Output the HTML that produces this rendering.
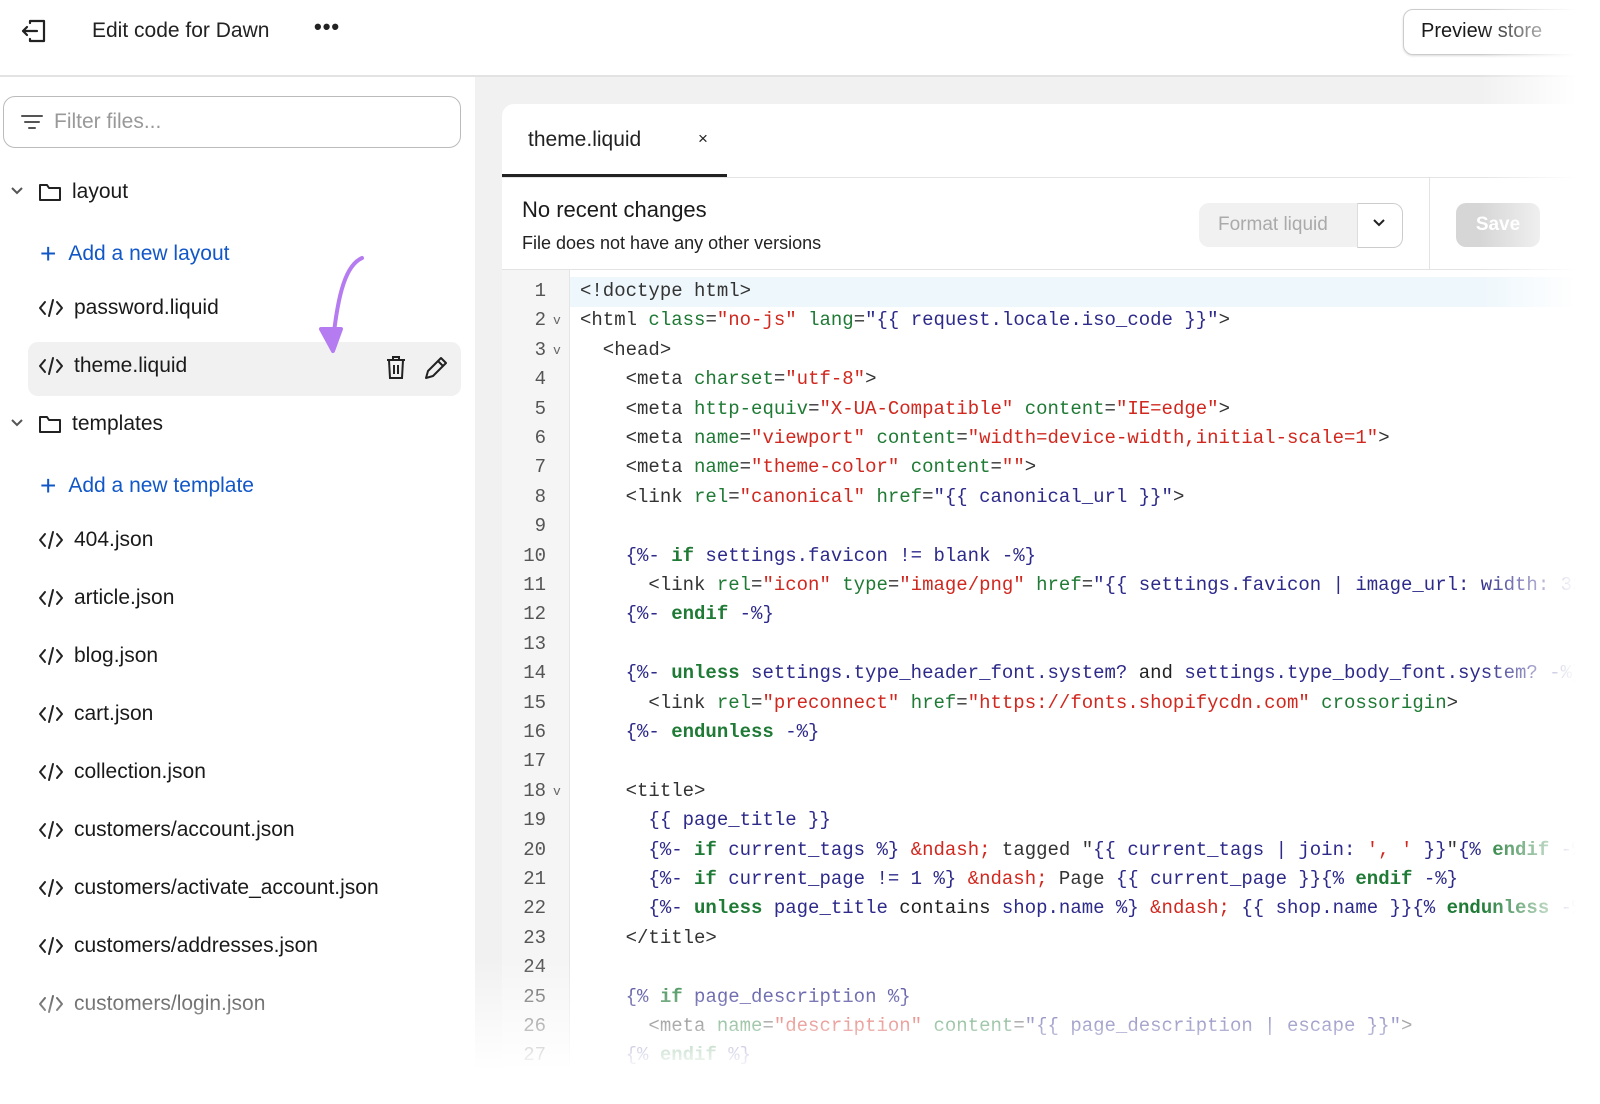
<!DOCTYPE html>
<html><head><style>
body{margin:0;width:1600px;height:1083px;overflow:hidden;background:#fff;font-family:"Liberation Sans",sans-serif;position:relative}
.hdr{position:absolute;left:0;top:0;width:1600px;height:75px;background:#fff;border-bottom:2px solid #e3e3e3;box-shadow:0 2px 4px rgba(0,0,0,.05)}
.side{position:absolute;left:0;top:77px;width:475px;height:1006px;background:#fff}
.main{position:absolute;left:475px;top:77px;width:1125px;height:1006px;background:#f1f1f1}
.item{position:absolute;left:38px;font-size:21px;color:#1a1a1a;display:flex;align-items:center}
.item svg{margin-right:10px}
.blue{color:#1257c7}
.code{position:absolute;left:502px;top:270px;width:1098px;height:813px;background:#fff;font-family:"Liberation Mono",monospace;font-size:19px}
.gut{position:absolute;left:0;top:0;width:67px;height:813px;background:#f5f5f5;border-right:1px solid #e5e5e5}
.ln{position:absolute;left:0;width:44px;text-align:right;color:#555;font-size:19px}
.cl{position:absolute;left:78px;white-space:pre;color:#333}
.a{color:#1f7a35}.s{color:#d0281f}.v{color:#2d2a8a}.k{color:#1f7a35;font-weight:bold}
</style></head><body>
<div class="hdr">
<svg style="position:absolute;left:20px;top:18px" width="28" height="26" viewBox="0 0 28 26" fill="none" stroke="#222" stroke-width="2.2" stroke-linecap="round" stroke-linejoin="round"><path d="M10 5V3h14v20H10v-2"/><path d="M17 13H3M7 9l-4 4 4 4"/></svg>
<div style="position:absolute;left:92px;top:19px;font-size:21px;color:#222">Edit code for Dawn</div>
<div style="position:absolute;left:314px;top:14px;font-size:22px;letter-spacing:1px;color:#222;font-weight:bold">•••</div>
<div style="position:absolute;left:1403px;top:9px;width:220px;height:44px;border:1px solid #ccc;border-radius:10px;box-shadow:0 1px 2px rgba(0,0,0,.15)"></div>
<div style="position:absolute;left:1421px;top:20px;font-size:20px;color:#1a1a1a">Preview store</div>
</div>
<div class="side">
<div style="position:absolute;left:3px;top:19px;width:456px;height:50px;border:1px solid #bbb;border-radius:12px"></div>
<svg style="position:absolute;left:20px;top:36px" width="24" height="18" stroke="#555" stroke-width="2" stroke-linecap="round"><path d="M2 3h20M5 9h14M9 15h6"/></svg>
<div style="position:absolute;left:54px;top:33px;font-size:21px;color:#999">Filter files...</div>
<div style="position:absolute;left:28px;top:265px;width:433px;height:54px;background:#f1f1f1;border-radius:10px"></div>
</div>
<div id="items"></div>
<div class="main">
<div style="position:absolute;left:27px;top:27px;width:1098px;height:1000px;background:#fff;border-radius:12px 0 0 0"></div>
<div style="position:absolute;left:53px;top:51px;font-size:21px;color:#222">theme.liquid</div>
<div style="position:absolute;left:223px;top:52px;font-size:17px;color:#222">×</div>
<div style="position:absolute;left:27px;top:97px;width:225px;height:3px;background:#222"></div>
<div style="position:absolute;left:27px;top:100px;width:1098px;height:1px;background:#e3e3e3"></div>
<div style="position:absolute;left:47px;top:120px;font-size:22px;color:#1a1a1a">No recent changes</div>
<div style="position:absolute;left:47px;top:156px;font-size:18px;color:#222">File does not have any other versions</div>
<div style="position:absolute;left:724px;top:126px;width:202px;height:44px;background:#f1f1f1;border-radius:10px"></div>
<div style="position:absolute;left:882px;top:126px;width:44px;height:43px;background:#fff;border:1px solid #ccc;border-left:1px solid #ddd;border-radius:0 10px 10px 0"></div>
<div style="position:absolute;left:743px;top:137px;font-size:19px;color:#aaa">Format liquid</div>
<svg style="position:absolute;left:897px;top:141px" width="14" height="10" fill="none" stroke="#222" stroke-width="2"><path d="M2 2l5 5 5-5"/></svg>
<div style="position:absolute;left:954px;top:100px;width:1px;height:93px;background:#e3e3e3"></div>
<div style="position:absolute;left:981px;top:126px;width:84px;height:44px;background:#d6d6d6;border-radius:10px;color:#fff;font-size:19px;font-weight:bold;text-align:center;line-height:44px">Save</div>
<div style="position:absolute;left:27px;top:192px;width:1098px;height:1px;background:#e3e3e3"></div>
</div>
<div class="code">
<div style="position:absolute;left:0;top:7px;width:1098px;height:30px;background:#eef7fc"></div>
<div class="gut"></div>
<div id="lines"></div>
</div>
<svg style="position:absolute;left:312px;top:253px" width="56" height="106" fill="none" stroke="#b57bf0" stroke-width="4" stroke-linecap="round"><path d="M50 5C34 12 26 40 21 88"/><path d="M9 76l12 22 8-22z" fill="#b57bf0" stroke-linejoin="round"/></svg>
<svg style="position:absolute;left:385px;top:355px" width="22" height="26" fill="none" stroke="#222" stroke-width="2"><path d="M2 5h18M8 5V2h6v3M4 5l1 18h12l1-18M9 10v9M13 10v9"/></svg>
<svg style="position:absolute;left:423px;top:355px" width="26" height="26" fill="none" stroke="#222" stroke-width="2" stroke-linejoin="round"><path d="M3 23l2-7L18 3l5 5L10 21z M15 6l5 5"/></svg>
<div style="position:absolute;left:0;top:960px;width:1600px;height:123px;background:linear-gradient(rgba(255,255,255,0),#fff 90%)"></div>
<div style="position:absolute;left:1480px;top:0;width:120px;height:1083px;background:linear-gradient(90deg,rgba(255,255,255,0),#fff 80%)"></div>
<script>
var ic='<svg width="26" height="20" fill="none" stroke="#222" stroke-width="2" stroke-linecap="round" stroke-linejoin="round"><path d="M7 4L2 10l5 6M19 4l5 6-5 6M15 2l-4 16"/></svg>';
var fold='<svg width="24" height="20" fill="none" stroke="#222" stroke-width="2" stroke-linejoin="round"><path d="M2 3h7l2 3h11v12H2z"/></svg>';
var chev='<svg style="position:absolute;left:-28px;top:6px" width="14" height="10" fill="none" stroke="#555" stroke-width="2"><path d="M2 2l5 5 5-5"/></svg>';
var plus='<span style="font-size:28px;margin-right:12px;margin-left:2px">+</span>';
var it=[[194,fold,'layout',0,1],[252,plus,'Add a new layout',1],[310,ic,'password.liquid'],[368,ic,'theme.liquid'],[426,fold,'templates',0,1],[484,plus,'Add a new template',1],[542,ic,'404.json'],[600,ic,'article.json'],[658,ic,'blog.json'],[716,ic,'cart.json'],[774,ic,'collection.json'],[832,ic,'customers/account.json'],[890,ic,'customers/activate_account.json'],[948,ic,'customers/addresses.json'],[1006,ic,'customers/login.json']];
var h='';it.forEach(function(a){h+='<div class="item'+(a[3]?' blue':'')+'" style="top:'+(a[0]-14)+'px">'+(a[4]?chev:'')+a[1]+a[2]+'</div>'});
document.getElementById('items').innerHTML=h;
var L=['&lt;!doctype html&gt;',
'&lt;html <span class=a>class</span>=<span class=s>"no-js"</span> <span class=a>lang</span>=<span class=v>"{{ request.locale.iso_code }}"</span>&gt;',
'  &lt;head&gt;',
'    &lt;meta <span class=a>charset</span>=<span class=s>"utf-8"</span>&gt;',
'    &lt;meta <span class=a>http-equiv</span>=<span class=s>"X-UA-Compatible"</span> <span class=a>content</span>=<span class=s>"IE=edge"</span>&gt;',
'    &lt;meta <span class=a>name</span>=<span class=s>"viewport"</span> <span class=a>content</span>=<span class=s>"width=device-width,initial-scale=1"</span>&gt;',
'    &lt;meta <span class=a>name</span>=<span class=s>"theme-color"</span> <span class=a>content</span>=<span class=s>""</span>&gt;',
'    &lt;link <span class=a>rel</span>=<span class=s>"canonical"</span> <span class=a>href</span>=<span class=v>"{{ canonical_url }}"</span>&gt;',
'',
'    <span class=v>{%- <b class=k>if</b> settings.favicon != blank -%}</span>',
'      &lt;link <span class=a>rel</span>=<span class=s>"icon"</span> <span class=a>type</span>=<span class=s>"image/png"</span> <span class=a>href</span>=<span class=v>"{{ settings.favicon | image_url: width: 32 }}"</span>&gt;',
'    <span class=v>{%- <b class=k>endif</b> -%}</span>',
'',
'    <span class=v>{%- <b class=k>unless</b> settings.type_header_font.system? <span style="color:#222">and</span> settings.type_body_font.system? -%}</span>',
'      &lt;link <span class=a>rel</span>=<span class=s>"preconnect"</span> <span class=a>href</span>=<span class=s>"https://fonts.shopifycdn.com"</span> <span class=a>crossorigin</span>&gt;',
'    <span class=v>{%- <b class=k>endunless</b> -%}</span>',
'',
'    &lt;title&gt;',
'      <span class=v>{{ page_title }}</span>',
'      <span class=v>{%- <b class=k>if</b> current_tags %}</span> <span class=s>&amp;ndash;</span> tagged "<span class=v>{{ current_tags | join: <span class=s>\', \'</span> }}</span>"<span class=v>{% <b class=k>endif</b> -%}</span>',
'      <span class=v>{%- <b class=k>if</b> current_page != 1 %}</span> <span class=s>&amp;ndash;</span> Page <span class=v>{{ current_page }}{% <b class=k>endif</b> -%}</span>',
'      <span class=v>{%- <b class=k>unless</b> page_title <span style="color:#222">contains</span> shop.name %}</span> <span class=s>&amp;ndash;</span> <span class=v>{{ shop.name }}{% <b class=k>endunless</b> -%}</span>',
'    &lt;/title&gt;',
'',
'    <span class=v>{% <b class=k>if</b> page_description %}</span>',
'      &lt;meta <span class=a>name</span>=<span class=s>"description"</span> <span class=a>content</span>=<span class=v>"{{ page_description | escape }}"</span>&gt;',
'    <span class=v>{% <b class=k>endif</b> %}</span>'];
var f={2:1,3:1,18:1};var o='';
L.forEach(function(t,i){var y=10+i*29.4;o+='<div class="ln" style="top:'+y+'px">'+(i+1)+'</div>';if(f[i+1])o+='<div style="position:absolute;left:51px;top:'+(y+4)+'px;font-size:13px;color:#666">v</div>';o+='<div class="cl" style="top:'+y+'px">'+t+'</div>'});
document.getElementById('lines').innerHTML=o;
</script>
</body></html>
